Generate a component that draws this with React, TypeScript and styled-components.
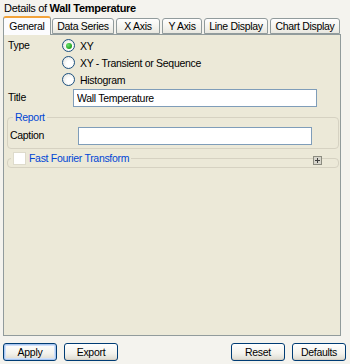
import styled, { createGlobalStyle } from 'styled-components';

const GlobalStyle = createGlobalStyle`
  body {
    margin: 0;
    background: #f4f3ee;
    font-family: "Liberation Sans", Arial, sans-serif;
    font-size: 10.5px;
    letter-spacing: -0.3px;
    color: #000;
  }
  * { box-sizing: border-box; }
`;

const Page = styled.div`
  width: 350px;
  height: 364px;
  display: flex;
  flex-direction: column;
`;

const Header = styled.div`
  height: 17px;
  padding: 1px 0 0 4px;
  font-size: 11px;
  line-height: 14px;
  white-space: nowrap;
`;

const TabBar = styled.div`
  display: flex;
  align-items: flex-end;
  height: 17px;
  padding-left: 3px;
  position: relative;
  z-index: 1;
`;

const Tab = styled.div<{ $active?: boolean; $w: number }>`
  width: ${(p) => p.$w}px;
  height: ${(p) => (p.$active ? '19px' : '16px')};
  margin-right: ${(p) => (p.$active ? '1px' : '2px')};
  margin-bottom: ${(p) => (p.$active ? '-1px' : '0')};
  padding-top: ${(p) => (p.$active ? '2px' : '1px')};
  border: 1px solid #919b9c;
  border-bottom: ${(p) => (p.$active ? 'none' : '1px solid #919b9c')};
  border-top: ${(p) => (p.$active ? '2px solid #f2a33a' : '1px solid #919b9c')};
  border-radius: 3px 3px 0 0;
  background: ${(p) =>
    p.$active ? '#fcfcfe' : 'linear-gradient(#ffffff, #f1f0ea 70%, #e8e7df)'};
  line-height: 13px;
  text-align: center;
  white-space: nowrap;
`;

const Panel = styled.div`
  flex: 1;
  margin: 0 9px 0 3px;
  border: 1px solid #919b9c;
  background: #ece9d8;
  padding: 2px 1px 0 4px;
  display: flex;
  flex-direction: column;
`;

const Row = styled.div`
  display: flex;
  align-items: flex-start;
`;

const Label = styled.div<{ $w: number }>`
  width: ${(p) => p.$w}px;
  flex-shrink: 0;
  line-height: 17px;
`;

const RadioList = styled.div`
  display: flex;
  flex-direction: column;
`;

const RadioRow = styled.label`
  display: flex;
  align-items: center;
  gap: 5px;
  height: 17px;
`;

const Radio = styled.span<{ $checked?: boolean }>`
  width: 13px;
  height: 13px;
  border-radius: 50%;
  border: 1px solid #1c5180;
  background: radial-gradient(circle at 60% 60%, #ffffff 30%, #dcdcd6 100%);
  display: flex;
  align-items: center;
  justify-content: center;
  &::after {
    content: '';
    display: ${(p) => (p.$checked ? 'block' : 'none')};
    width: 6px;
    height: 6px;
    border-radius: 50%;
    background: radial-gradient(circle at 35% 35%, #6be26b, #21a121 70%);
  }
`;

const TextInput = styled.input<{ $w: number }>`
  width: ${(p) => p.$w}px;
  height: 18px;
  border: 1px solid #7f9db9;
  background: #fff;
  font: inherit;
  letter-spacing: -0.3px;
  padding: 0 3px;
  outline: none;
`;

const Group = styled.fieldset`
  margin: 0 0 0 -1px;
  border: 1px solid #d6d2c2;
  border-radius: 4px;
  padding: 3px 0 3px 2px;
  min-width: 0;
`;

const Legend = styled.legend`
  color: #0046d5;
  padding: 0 2px;
  margin-left: 3px;
  line-height: 13px;
  display: flex;
  align-items: center;
  gap: 3px;
`;

const CollapsedGroup = styled(Group)`
  position: relative;
  margin-top: 3px;
  height: 16px;
  padding: 0;
`;

const Checkbox = styled.span`
  width: 13px;
  height: 13px;
  background: #fff;
  border: 1px solid #dedbcc;
`;

// sits on the group's top border, over the line
const Expander = styled.span`
  position: absolute;
  right: 16px;
  top: -9px;
  width: 9px;
  height: 9px;
  border: 1px solid #8c8c80;
  background: #ecebe4;
  display: flex;
  align-items: center;
  justify-content: center;
`;

const Footer = styled.div`
  height: 28px;
  display: flex;
  align-items: flex-start;
  padding: 7px 4px 0 3px;
  gap: 7px;
`;

const Spacer = styled.div`
  flex: 1;
`;

const Button = styled.button<{ $default?: boolean }>`
  width: 54px;
  height: 18px;
  border: 1px solid #003c74;
  border-radius: 3px;
  background: linear-gradient(#ffffff, #f3f2ec 60%, #dcdad0);
  box-shadow: ${(p) =>
    p.$default
      ? 'inset 0 0 0 1px #a9c6f0, inset 0 0 0 2px #cfe0fa'
      : 'inset 0 -1px 0 #d6d0c5'};
  font: inherit;
  letter-spacing: -0.3px;
  padding: 0;
  line-height: 14px;
  color: #000;
`;

const tabs = [
  { label: 'General', w: 48 },
  { label: 'Data Series', w: 62 },
  { label: 'X Axis', w: 44 },
  { label: 'Y Axis', w: 40 },
  { label: 'Line Display', w: 64 },
  { label: 'Chart Display', w: 70 },
];

export default function App() {
  return (
    <Page>
      <GlobalStyle />
      <Header>
        Details of <b>Wall Temperature</b>
      </Header>
      <TabBar>
        {tabs.map((t, i) => (
          <Tab key={t.label} $w={t.w} $active={i === 0}>
            {t.label}
          </Tab>
        ))}
      </TabBar>
      <Panel>
        <Row>
          <Label $w={54}>Type</Label>
          <RadioList>
            <RadioRow>
              <Radio $checked />
              XY
            </RadioRow>
            <RadioRow>
              <Radio />
              XY - Transient or Sequence
            </RadioRow>
            <RadioRow>
              <Radio />
              Histogram
            </RadioRow>
          </RadioList>
        </Row>
        <Row style={{ marginTop: 1, marginBottom: 4 }}>
          <Label $w={65}>Title</Label>
          <TextInput $w={244} defaultValue="Wall Temperature" />
        </Row>
        <Group>
          <Legend>Report</Legend>
          <Row>
            <Label $w={68}>Caption</Label>
            <TextInput $w={234} />
          </Row>
        </Group>
        <CollapsedGroup>
          <Legend>
            <Checkbox />
            Fast Fourier Transform
          </Legend>
          <Expander>
            <svg width="7" height="7" viewBox="0 0 7 7">
              <rect x="0" y="0" width="7" height="7" fill="#d8d6cc" />
              <path d="M3.5 1v5M1 3.5h5" stroke="#404040" strokeWidth="1" />
            </svg>
          </Expander>
        </CollapsedGroup>
      </Panel>
      <Footer>
        <Button $default>Apply</Button>
        <Button>Export</Button>
        <Spacer />
        <Button>Reset</Button>
        <Button>Defaults</Button>
      </Footer>
    </Page>
  );
}
